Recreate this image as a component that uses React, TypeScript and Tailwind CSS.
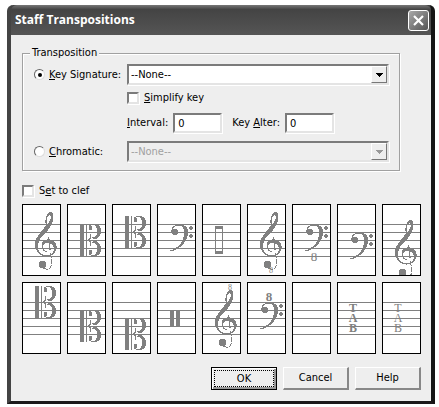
import { useState } from 'react';
import type { ReactNode } from 'react';
import { clsx } from 'clsx';

const sunken =
  'border-2 border-t-[#7b7b7b] border-l-[#7b7b7b] border-r-[#e4e4e4] border-b-[#e4e4e4] shadow-[1px_1px_0_#fff]';

function Treble({ dy = 0 }: { dy?: number }) {
  return (
    <g transform={`translate(0 ${dy})`}>
      <path
        d="M26 9 L28 8 L30 8 L31.500 12 C31.500 18 29.500 22 25 27 C20 32 16 36 16 42 C16 46 17 48 19 50 C14 48 12.500 43 13 39 C14 33 18 29 22 24 C26 20 28.500 17 29 13 L28 10.500 L26 12 Z"
        fill="#808080"
      />
      <path
        d="M27 9.500 C24 12 23.500 17 24.500 22 L25.500 27 M26.500 33 L28 46"
        fill="none"
        stroke="#808080"
        strokeWidth="1.200"
      />
      <path d="M28.500 49 L29.500 56 C30.500 62 28 65.500 25 65.500 L21 64" fill="none" stroke="#808080" strokeDasharray="5 1" />
      <path d="M14 44 C16 50 20 52 25 52 C31 51 34 48 34 43" fill="none" stroke="#808080" strokeWidth="1.200" />
      <path
        d="M20 45 C18 37 23 34.500 28 35.500 C33 36.500 35.500 41 34.500 45 C34 48 32 50 30 51 C33 46 32 39 27 39 C23 38.500 21 40 21 44 Z"
        fill="#808080"
      />
      <path d="M20.500 43 C21 46 23 47.500 25 48" fill="none" stroke="#808080" />
      <path d="M18 57 h4 l2 2 v3 l-2 2 h-4 l-1 -2 v-3 Z" fill="#808080" />
    </g>
  );
}

function Bass({ dy = 0 }: { dy?: number }) {
  return (
    <g transform={`translate(0 ${dy})`} fill="#808080">
      <circle cx="18" cy="28" r="3.300" />
      <path d="M22 20.500 C29 20 31.500 24 31 30 C30.500 38 23 45.500 14 47.500 L13.500 46.500 C21 44 26 39 27 31 C27.500 25 26 21 22 21.500 Z" />
      <path d="M15 28 C14.500 23 18 21 23 21" fill="none" stroke="#808080" />
      <circle cx="34" cy="24" r="1.900" />
      <circle cx="34" cy="32" r="1.900" />
    </g>
  );
}

function CClef({ dy = 0 }: { dy?: number }) {
  const half = (
    <>
      <circle cx="23.500" cy="24" r="2" />
      <path d="M26 20 C31 20 34 22 34 27 C34 32 31 35 27.500 35 C25.500 35 24.500 34 24 32.500 C28 35 30 32 30 27.500 C30 23 29 21 26 21 Z" />
      <path d="M22 23 C22 21 24 20.500 27 20.500 M24 30 C24 33 23.500 35 21.500 36.500" fill="none" stroke="#808080" />
    </>
  );
  return (
    <g transform={`translate(0 ${dy})`} fill="#808080">
      <rect x="13" y="20" width="4" height="32" />
      <rect x="19" y="20" width="1" height="32" />
      {half}
      <g transform="matrix(1 0 0 -1 0 72)">{half}</g>
    </g>
  );
}

function Percussion() {
  return (
    <g fill="#808080">
      <rect x="13" y="28" width="4" height="16" />
      <rect x="19" y="28" width="4" height="16" />
    </g>
  );
}

function Box() {
  return (
    <path
      d="M13 22 h8 v28 h-8 Z M14 25 v22 h6 v-22 Z"
      fill="#808080"
      fillRule="evenodd"
    />
  );
}

type GlyphProps = { x: number; y: number; size: number; bold?: boolean; children: string };

function Glyph({ x, y, size, bold, children }: GlyphProps) {
  return (
    <text
      x={x}
      y={y}
      fontSize={size}
      fontWeight={bold ? 700 : 400}
      textAnchor="middle"
      fill="#808080"
      className="font-['Liberation_Serif',serif]"
    >
      {children}
    </text>
  );
}

function Tab({ bold }: { bold?: boolean }) {
  return (
    <>
      <Glyph x={16} y={30} size={12} bold={bold}>T</Glyph>
      <Glyph x={16} y={40} size={12} bold={bold}>A</Glyph>
      <Glyph x={16} y={50} size={12} bold={bold}>B</Glyph>
    </>
  );
}

const clefs: { name: string; art: ReactNode }[] = [
  { name: 'Treble', art: <Treble /> },
  { name: 'Alto', art: <CClef /> },
  { name: 'Tenor', art: <CClef dy={-8} /> },
  { name: 'Bass', art: <Bass /> },
  { name: 'Percussion box', art: <Box /> },
  { name: 'Treble 8 below', art: <><Treble /><Glyph x={24} y={69} size={8}>8</Glyph></> },
  { name: 'Bass 8 below', art: <><Bass /><Glyph x={22} y={57} size={13}>8</Glyph></> },
  { name: 'Baritone F', art: <Bass dy={8} /> },
  { name: 'French violin', art: <Treble dy={8} /> },
  { name: 'Baritone C', art: <CClef dy={-16} /> },
  { name: 'Mezzo-soprano', art: <CClef dy={8} /> },
  { name: 'Soprano', art: <CClef dy={16} /> },
  { name: 'Percussion', art: <Percussion /> },
  { name: 'Treble 8 above', art: <><Treble /><Glyph x={28} y={8} size={8}>8</Glyph></> },
  { name: 'Bass 8 above', art: <><Bass /><Glyph x={22} y={19} size={13} bold>8</Glyph></> },
  { name: 'Blank', art: null },
  { name: 'Tab bold', art: <Tab bold /> },
  { name: 'Tab', art: <Tab /> },
];

function ClefButton({ name, children }: { name: string; children: ReactNode }) {
  return (
    <button aria-label={name} className="h-[72px] w-[39px] border border-black bg-white">
      <svg viewBox="1 1 37 70" shapeRendering="crispEdges" className="block h-[70px] w-[37px]">
        {[20, 28, 36, 44, 52].map((y) => (
          <rect key={y} x="1" y={y} width="37" height="1" fill="#808080" />
        ))}
        {children}
      </svg>
    </button>
  );
}

function ComboBox({ label, disabled }: { label: string; disabled?: boolean }) {
  return (
    <div className="relative">
      <select
        aria-label={label}
        disabled={disabled}
        className={clsx(
          sunken,
          'block h-[21px] w-full appearance-none pl-0.5 leading-4 opacity-100 outline-none',
          disabled ? 'bg-[#eee] text-[#a0a0a0]' : 'bg-white text-black'
        )}
      >
        <option>--None--</option>
      </select>
      <span className="pointer-events-none absolute inset-y-0.5 right-0.5 flex w-4 items-center justify-center border border-t-white border-r-[#777] border-b-[#777] border-l-white bg-[#eee]">
        <svg viewBox="0 0 7 4" shapeRendering="crispEdges" className="h-1 w-[7px]">
          <path d="M0 0 h7 v1 h-1 v1 h-1 v1 h-1 v1 h-1 v-1 h-1 v-1 h-1 v-1 h-1 Z" fill={disabled ? '#999' : '#000'} />
        </svg>
      </span>
    </div>
  );
}

function Radio({ checked, onChange, children }: { checked: boolean; onChange: () => void; children: ReactNode }) {
  return (
    <label className="flex items-center gap-1">
      <input
        type="radio"
        name="mode"
        checked={checked}
        onChange={onChange}
        className="flex size-[11px] shrink-0 appearance-none items-center justify-center rounded-full border border-t-[#666] border-r-[#ddd] border-b-[#ddd] border-l-[#666] bg-white checked:before:size-1 checked:before:rounded-full checked:before:bg-black"
      />
      <span>{children}</span>
    </label>
  );
}

function Check({ children }: { children: ReactNode }) {
  return (
    <label className="flex h-[13px] w-fit items-center gap-[5px]">
      <input
        type="checkbox"
        className={clsx(sunken, 'size-3 appearance-none bg-white checked:bg-[#777]')}
      />
      <span>{children}</span>
    </label>
  );
}

function NumberBox({ label }: { label: ReactNode }) {
  return (
    <label className="flex items-center gap-[5px]">
      <span>{label}</span>
      <input defaultValue="0" className={clsx(sunken, 'h-5 w-[49px] bg-white pl-[3px] outline-none')} />
    </label>
  );
}

function DialogButton({ primary, children }: { primary?: boolean; children: ReactNode }) {
  return (
    <button
      className={clsx(
        'h-[23px] w-[66px] bg-[#eee]',
        primary
          ? 'border border-black p-0.5 shadow-[inset_1px_1px_0_#fff,inset_-2px_-2px_0_#999]'
          : 'border-t border-r-2 border-b-2 border-l border-t-white border-r-[#888] border-b-[#888] border-l-white'
      )}
    >
      {primary ? (
        <span className="flex h-full items-center justify-center border border-dotted border-black">{children}</span>
      ) : (
        children
      )}
    </button>
  );
}

export default function App() {
  const [mode, setMode] = useState<'key' | 'chromatic'>('key');

  return (
    <main className="bg-white pt-[5px] pr-1 pl-[7px] font-['DejaVu_Sans_Condensed','DejaVu_Sans',sans-serif] text-[11px] leading-[14px] text-black">
      <div className="rounded-t-md border-r-4 border-b-[3px] border-l-4 border-r-[#151515] border-b-[#1c1a1b] border-l-[#444] bg-[#444]">
        <header className="flex h-[30px] items-center justify-between rounded-t-md bg-linear-to-b from-[#777] via-[#444] via-15% to-[#555] pr-0.5 pl-1">
          <h1 className="font-['Open_Sans',sans-serif] text-[12px] font-bold text-white">Staff Transpositions</h1>
          <button
            aria-label="Close"
            className="flex size-[21px] items-center justify-center rounded-[3px] border border-white bg-linear-to-br from-[#aaa] to-[#555]"
          >
            <svg viewBox="0 0 11 11" className="size-[11px]">
              <path d="M1 1 L10 10 M10 1 L1 10" stroke="#fff" strokeWidth="2.200" />
            </svg>
          </button>
        </header>

        <div className="bg-[#eee] pt-[11px] pr-2.5 pb-[11px] pl-[11px]">
          <fieldset className="mr-[21px] border border-[#a0a0a0] pr-2.5 pb-2 pl-[11px] shadow-[1px_1px_0_#fff,inset_1px_1px_0_#fff]">
            <legend className="-ml-1 bg-[#eee] px-0.5">Transposition</legend>
            <div className="grid grid-cols-[93px_1fr] pt-1">
              <Radio checked={mode === 'key'} onChange={() => setMode('key')}>
                <u>K</u>ey Signature:
              </Radio>
              <ComboBox label="Key Signature" disabled={mode !== 'key'} />
              <div className="col-start-2 mt-1.5">
                <Check><u>S</u>implify key</Check>
              </div>
              <div className="col-start-2 mt-[9px] flex gap-2.5">
                <NumberBox label={<><u>I</u>nterval:</>} />
                <NumberBox label={<>Key <u>A</u>lter:</>} />
              </div>
            </div>
            <div className="mt-2 grid grid-cols-[93px_1fr]">
              <Radio checked={mode === 'chromatic'} onChange={() => setMode('chromatic')}>
                <u>C</u>hromatic:
              </Radio>
              <ComboBox label="Chromatic" disabled={mode !== 'chromatic'} />
            </div>
          </fieldset>

          <div className="mt-[13px]">
            <Check>S<u>e</u>t to clef</Check>
          </div>

          <div className="mt-[7px] grid grid-cols-[repeat(9,39px)] justify-between gap-y-1.5">
            {clefs.map((c) => (
              <ClefButton key={c.name} name={c.name}>{c.art}</ClefButton>
            ))}
          </div>

          <footer className="mt-[13px] flex justify-end gap-1.5">
            <DialogButton primary>OK</DialogButton>
            <DialogButton>Cancel</DialogButton>
            <DialogButton>Help</DialogButton>
          </footer>
        </div>
      </div>
    </main>
  );
}
